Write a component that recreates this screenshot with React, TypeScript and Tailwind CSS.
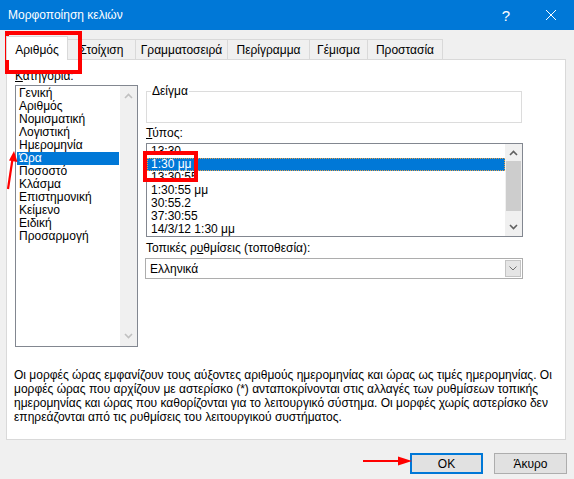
import React from "react";

const categories = [
  "Γενική",
  "Αριθμός",
  "Νομισματική",
  "Λογιστική",
  "Ημερομηνία",
  "Ώρα",
  "Ποσοστό",
  "Κλάσμα",
  "Επιστημονική",
  "Κείμενο",
  "Ειδική",
  "Προσαρμογή",
];

const types = ["13:30", "1:30 μμ", "13:30:55", "1:30:55 μμ", "30:55.2", "37:30:55", "14/3/12 1:30 μμ"];

const tabs = [
  { label: "Στοίχιση", w: "w-[68px]" },
  { label: "Γραμματοσειρά", w: "w-[92px]" },
  { label: "Περίγραμμα", w: "w-[82px]" },
  { label: "Γέμισμα", w: "w-[58px]" },
  { label: "Προστασία", w: "w-[75px]" },
];

const Chevron = ({ up, color, className }: { up?: boolean; color: string; className?: string }) => (
  <svg width="9" height="6" viewBox="0 0 9 6" className={className}>
    <path d={up ? "M1 5 L4.5 1.5 L8 5" : "M1 1 L4.5 4.5 L8 1"} fill="none" stroke={color} strokeWidth="1.6" />
  </svg>
);

export default function App() {
  return (
    <div className="relative h-[479px] w-[574px] overflow-hidden bg-[#f0f0f0] font-['Liberation_Sans','Noto_Sans',sans-serif] text-[12px] text-black">
      {/* title bar */}
      <div className="flex h-[30px] items-center bg-[#0078d7] text-white">
        <span className="ml-[8px] text-[12px]">Μορφοποίηση κελιών</span>
        <span className="ml-auto text-[15px] leading-none">?</span>
        <svg width="10" height="10" viewBox="0 0 10 10" className="ml-[36px] mr-[18px]">
          <path d="M0 0 L10 10 M10 0 L0 10" stroke="white" strokeWidth="1" />
        </svg>
      </div>

      {/* tabs */}
      <div className="flex h-[29px] items-end pl-[6px]">
        <div className="relative z-10 -mb-px flex h-[24px] w-[62px] items-center justify-center border border-b-0 border-[#d9d9d9] bg-white pt-[2px]">
          Αριθμός
        </div>
        {tabs.map((t) => (
          <div
            key={t.label}
            className={`flex h-[20px] ${t.w} items-center justify-center border-t border-r border-[#d9d9d9] bg-[#f0f0f0]`}
          >
            {t.label}
          </div>
        ))}
      </div>

      {/* panel */}
      <div className="ml-[6px] flex h-[381px] w-[560px] flex-col border border-[#d9d9d9] bg-white">
        <div className="flex">
          {/* category */}
          <div className="ml-[8px] pt-[9px]">
            <div className="h-[14px] leading-[14px]">
              <span className="underline">Κ</span>ατηγορία:
            </div>
            <div className="mt-[2px] flex h-[262px] w-[123px] border border-[#828790]">
              <div className="flex-1 pt-[1px]">
                {categories.map((c, i) => (
                  <div
                    key={c}
                    className={
                      i === 5
                        ? "mx-[1px] h-[13px] bg-[#0078d7] pl-[2px] leading-[13px] text-white"
                        : "h-[13px] pl-[3px] leading-[13px]"
                    }
                  >
                    {c}
                  </div>
                ))}
              </div>
              <div className="flex w-[17px] flex-col items-center justify-between bg-[#f0f0f0] py-[7px]">
                <Chevron up color="#c0c0c0" />
                <Chevron color="#c0c0c0" />
              </div>
            </div>
          </div>

          {/* right column */}
          <div className="ml-[8px] mt-[31px] w-[377px]">
            <div className="relative h-[32px] w-[376px] border border-[#dcdcdc]">
              <span className="absolute -top-[8px] left-[4px] bg-white px-[1px] leading-[14px]">Δείγμα</span>
            </div>
            <div className="mt-[3px] h-[14px] leading-[14px]">
              <span className="underline">Τ</span>ύπος:
            </div>
            <div className="mt-[3px] flex h-[94px] w-[377px] border border-[#828790]">
              <div className="flex-1 pt-[1px]">
                {types.map((t, i) => (
                  <div
                    key={t}
                    className={
                      i === 1
                        ? "h-[13px] border border-dotted border-[#e3a04a] bg-[#0078d7] pl-[3px] leading-[11px] text-white"
                        : "h-[13px] pl-[4px] leading-[13px]"
                    }
                  >
                    {t}
                  </div>
                ))}
              </div>
              <div className="flex w-[17px] flex-col bg-[#f0f0f0]">
                <div className="flex h-[17px] items-center justify-center">
                  <Chevron up color="#606060" />
                </div>
                <div className="mx-[1px] h-[50px] bg-[#cdcdcd]" />
                <div className="flex flex-1 items-end justify-center pb-[6px]">
                  <Chevron color="#606060" />
                </div>
              </div>
            </div>
            <div className="mt-[4px] h-[14px] leading-[14px]">
              Τοπικές ρ<span className="underline">υ</span>θμίσεις (τοποθεσία):
            </div>
            <div className="mt-[3px] flex h-[21px] w-[378px] -translate-x-px items-center border border-[#adadad] bg-white">
              <span className="flex-1 pl-[4px]">Ελληνικά</span>
              <div className="mr-px flex h-[17px] w-[16px] items-center justify-center border border-[#c4c4c4] bg-[#e5e5e5]">
                <svg width="8" height="5" viewBox="0 0 8 5">
                  <path d="M0.5 0.5 L4 4 L7.5 0.5" fill="none" stroke="#707070" strokeWidth="1" />
                </svg>
              </div>
            </div>
          </div>
        </div>

        <div className="ml-[7px] mt-[21px] leading-[14px] whitespace-nowrap">
          <div>Οι μορφές ώρας εμφανίζουν τους αύξοντες αριθμούς ημερομηνίας και ώρας ως τιμές ημερομηνίας. Οι</div>
          <div>μορφές ώρας που αρχίζουν με αστερίσκο (*) ανταποκρίνονται στις αλλαγές των ρυθμίσεων τοπικής</div>
          <div>ημερομηνίας και ώρας που καθορίζονται για το λειτουργικό σύστημα. Οι μορφές χωρίς αστερίσκο δεν</div>
          <div>επηρεάζονται από τις ρυθμίσεις του λειτουργικού συστήματος.</div>
        </div>
      </div>

      {/* buttons */}
      <div className="mt-[13px] flex justify-end gap-[11px] pr-[7px]">
        <button className="h-[21px] w-[73px] border-2 border-[#0078d7] bg-[#e1e1e1]">OK</button>
        <button className="h-[21px] w-[73px] border border-[#adadad] bg-[#e1e1e1]">Άκυρο</button>
      </div>

      {/* red annotations */}
      <div className="absolute left-[5px] top-[31px] h-[43px] w-[77px] border-4 border-[#ff0000]" />
      <div className="absolute left-[143px] top-[151px] h-[31px] w-[55px] border-4 border-[#ff0000]" />
      <svg className="absolute left-0 top-[145px]" width="24" height="50" viewBox="0 0 24 50">
        <path d="M8 44 L12.5 14" stroke="#ff0000" strokeWidth="2.2" />
        <path d="M14 6 L17.5 17 L9 15.5 Z" fill="#ff0000" />
      </svg>
      <svg className="absolute left-[360px] top-[454px]" width="54" height="14" viewBox="0 0 54 14">
        <path d="M3 7 L40 7" stroke="#ff0000" strokeWidth="2.2" />
        <path d="M52 7 L38 2.5 L38 11.5 Z" fill="#ff0000" />
      </svg>
    </div>
  );
}
